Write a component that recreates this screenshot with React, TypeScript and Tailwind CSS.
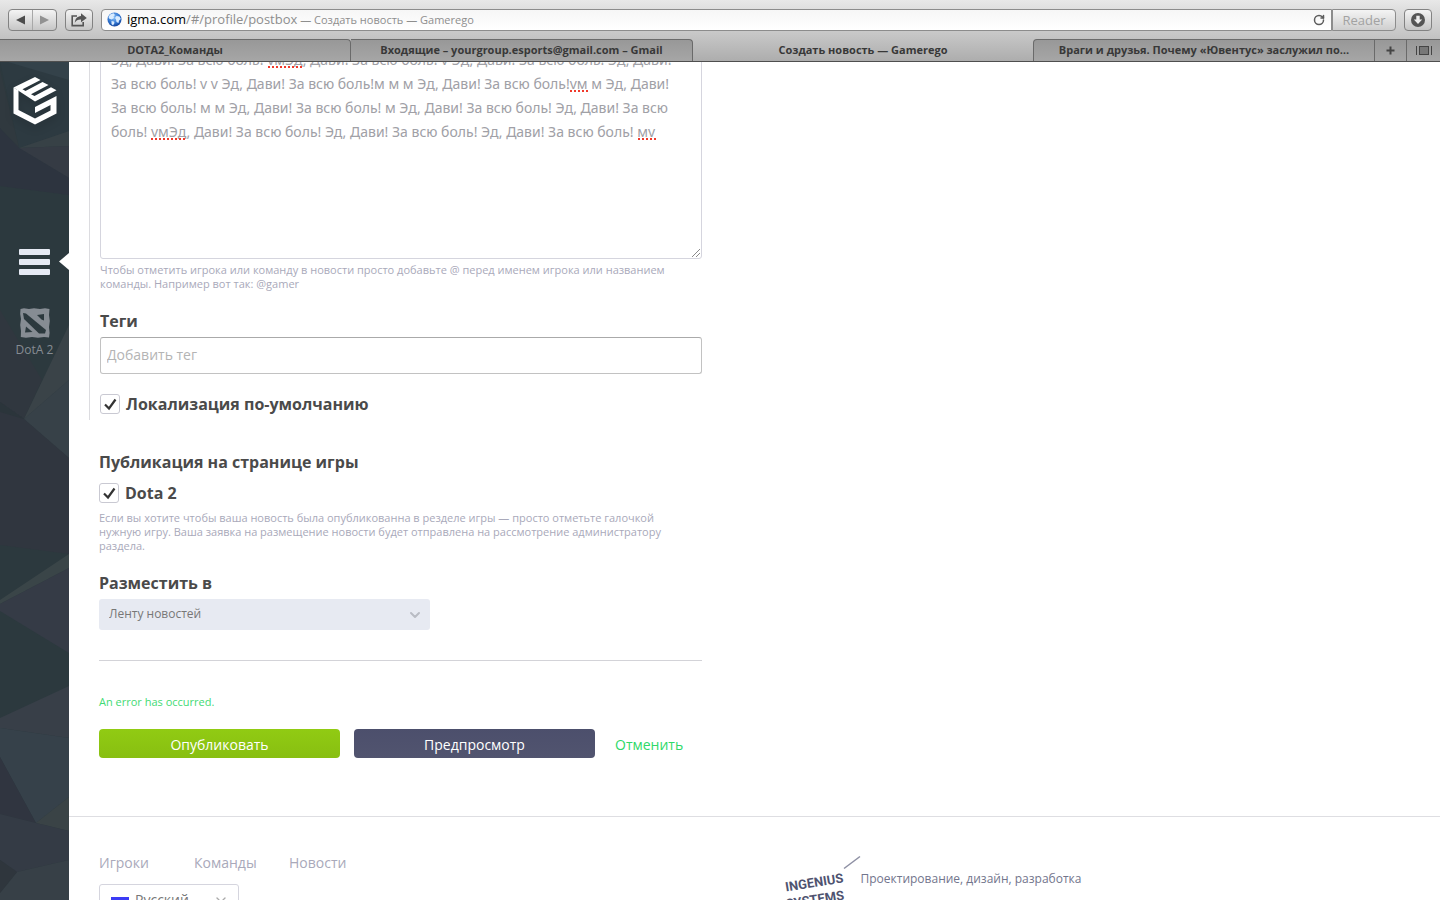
import React, { useState } from "react";
import { ChevronDown, RotateCw } from "lucide-react";

const STORY = [
  "Эд, Дави! За всю боль! vмЭд, Дави! За всю боль! v Эд, Дави! За всю боль! Эд, Дави!",
  "За всю боль! v v Эд, Дави! За всю боль!м м м Эд, Дави! За всю боль!vм м Эд, Дави!",
  "За всю боль! м м Эд, Дави! За всю боль! м Эд, Дави! За всю боль! Эд, Дави! За всю",
  "боль! vмЭд, Дави! За всю боль! Эд, Дави! За всю боль! Эд, Дави! За всю боль! мv",
].join("\n");

// spelling marks drawn over the editor
const MARKS = [
  "left-[168px] top-[26px] w-[34px]",
  "left-[470px] top-[50px] w-[18px]",
  "left-[51px] top-[98px] w-[34px]",
  "left-[538px] top-[98px] w-[18px]",
];

const TOOL_BUTTON =
  "flex h-[22px] items-center justify-center rounded-[4px] border border-[#828282] bg-linear-to-b from-[#f4f4f4] to-[#c6c6c6]";

function Toolbar() {
  return (
    <div className="flex h-[39px] items-center gap-2 px-2">
      <div className={`${TOOL_BUTTON} w-[49px]`}>
        <button aria-label="Назад" className="flex h-full flex-1 items-center justify-center border-r border-[#a8a8a8]">
          <svg width="9" height="10" viewBox="0 0 9 10">
            <path d="M9 0.5v9L0 5z" fill="#4c4c4c" />
          </svg>
        </button>
        <button aria-label="Вперёд" className="flex h-full flex-1 items-center justify-center">
          <svg width="9" height="10" viewBox="0 0 9 10">
            <path d="M0 0.5v9L9 5z" fill="#929292" />
          </svg>
        </button>
      </div>
      <button aria-label="Поделиться" className={`${TOOL_BUTTON} w-7`}>
        <svg width="16" height="14" viewBox="0 0 16 14" fill="none">
          <path d="M6 3H1.2v9.6h11V9" stroke="#555" strokeWidth="1.6" />
          <path d="M10 0.3l5.8 4.6L10 9.2V6.6C7 6.5 5.3 7.3 3.8 9.8 4 5.8 6.2 3.2 10 2.9z" fill="#555" />
        </svg>
      </button>
      <div className="flex h-[22px] flex-1">
        <div className="flex flex-1 items-center rounded-l-[4px] border border-[#8c8c8c] bg-linear-to-b from-[#f6f6f6] to-white pl-[5px] pr-[6px]">
          <svg width="15" height="15" viewBox="0 0 15 15">
            <defs>
              <radialGradient id="globe" cx="45%" cy="35%" r="70%">
                <stop offset="0" stopColor="#8ec4fa" />
                <stop offset="0.6" stopColor="#2f74d0" />
                <stop offset="1" stopColor="#103a8e" />
              </radialGradient>
            </defs>
            <circle cx="7.5" cy="7.5" r="7" fill="url(#globe)" />
            <path d="M3 2.5L6.5 1.2 8 3 6.5 4.5 7 6 4.5 7.5 2 6.5 1.5 5zM9.5 4L12.5 4.5 13.8 7 12 8.5 11.5 11 9.5 10 9 7.5 8 6zM4.5 9L7 9.5 7.5 11 6 13.5 4.5 12z" fill="#d9ecff" />
          </svg>
          <p className="ml-[5px] flex-1 whitespace-nowrap text-[13px] leading-5 text-[#8e8e8e]">
            <span className="text-black">igma.com</span>/#/profile/postbox
            <span className="text-[11px]"> — Создать новость — Gamerego</span>
          </p>
          <button aria-label="Обновить">
            <RotateCw size={12} strokeWidth={3} color="#5c5c5c" />
          </button>
        </div>
        <button className="w-16 rounded-r-[4px] border border-[#8c8c8c] bg-linear-to-b from-[#f4f4f4] to-[#cfcfcf] text-[13px] leading-5 text-[#a2a2a2]">
          Reader
        </button>
      </div>
      <button aria-label="Загрузки" className={`${TOOL_BUTTON} w-7`}>
        <svg width="14" height="14" viewBox="0 0 14 14">
          <circle cx="7" cy="7" r="7" fill="#555" />
          <path d="M5.3 2.8h3.4v3.7h2.5L7 11 2.8 6.5h2.5z" fill="#eee" />
        </svg>
      </button>
    </div>
  );
}

const TAB_OFF = "border-t border-[#6a6a6a] bg-linear-to-b from-[#989898] to-[#a6a6a6]";

function Tabs() {
  return (
    <div className="flex h-[23px] border-b border-[#4f4f4f] text-center text-[11px] font-bold leading-[18px] text-[#383838]">
      <div className="grid min-w-0 flex-1 grid-cols-[351fr_342fr_340fr_342fr]">
        <button className={`${TAB_OFF} truncate rounded-tr-[4px] border-r px-5 pb-0.5`}>DOTA2_Команды</button>
        <button className={`${TAB_OFF} truncate rounded-tr-[4px] border-r px-5 pb-0.5`}>
          Входящие – yourgroup.esports@gmail.com – Gmail
        </button>
        <button className="truncate border-t border-transparent px-5 pb-0.5">Создать новость — Gamerego</button>
        <button className={`${TAB_OFF} truncate rounded-tl-[4px] border-x px-5 pb-0.5`}>
          Враги и друзья. Почему «Ювентус» заслужил по…
        </button>
      </div>
      <button aria-label="Новая вкладка" className={`${TAB_OFF} flex w-8 items-center justify-center border-r`}>
        <svg width="9" height="9" viewBox="0 0 9 9">
          <path d="M4.5 0.5v8M0.5 4.5h8" stroke="#444" strokeWidth="2" />
        </svg>
      </button>
      <button aria-label="Все вкладки" className={`${TAB_OFF} flex w-[33px] items-center justify-center`}>
        <svg width="16" height="9" viewBox="0 0 16 9">
          <path d="M0.5 0v9M15.5 0v9" stroke="#444" />
          <rect x="3.5" y="0.5" width="9" height="8" fill="#777" stroke="#444" />
        </svg>
      </button>
    </div>
  );
}

function Sidebar() {
  return (
    <aside className="relative w-[69px] shrink-0 bg-[#2c393e]">
      <svg className="absolute inset-0 h-full w-full" viewBox="0 62 69 838" preserveAspectRatio="none">
        <path d="M0 62H69V131L19 148z" fill="#2d3a41" />
        <path d="M8 62H69V80z" fill="#34424a" />
        <path d="M0 70L19 148 0 128z" fill="#30393f" />
        <path d="M19 148L69 131V146z" fill="#374146" />
        <path d="M19 148L69 146V178z" fill="#353b44" />
        <path d="M0 128L19 148 69 178V195L0 186z" fill="#2d343f" />
        <path d="M0 310L42 380 24 419 0 402z" fill="#30373f" />
        <path d="M69 325V380L24 419z" fill="#3a4348" />
        <path d="M69 380V458L24 419z" fill="#374148" />
        <path d="M0 402L24 419 69 458V554L0 545z" fill="#30363f" />
        <path d="M0 402L24 419 0 412z" fill="#2b353b" />
        <path d="M0 600L69 554V568L0 604z" fill="#3a4548" />
        <path d="M0 604L69 568V653L0 611z" fill="#353b46" />
        <path d="M0 718L69 686V738L0 728z" fill="#383f48" />
        <path d="M0 728L69 738V797L36 823 0 757z" fill="#36414a" />
        <path d="M0 757L36 823 0 814z" fill="#303540" />
        <path d="M36 823L69 797V831z" fill="#3a4346" />
        <path d="M0 814L36 823 69 831V860L17 872 0 860z" fill="#343b45" />
        <path d="M17 872L69 860V900H0V893z" fill="#374047" />
        <path d="M0 860L17 872 0 893z" fill="#2f363d" />
      </svg>
      <div className="relative flex flex-col items-center pt-[15px]">
        <a href="#home" aria-label="Gamerego" className="drop-shadow-lg">
          <svg width="44" height="48" viewBox="0 0 44 48" fill="#fff">
            <path d="M0.5 10.5L22 0 27.5 3 9.5 12.3 12.5 14 29.5 5 35.5 8 18 17.2 21.5 19 38 10.3 43.5 13.2 22 24.5z" />
            <path d="M0.5 10.5V36.5L22 47.5 43.5 36.5V19L22 30V36L37.5 28V33.5L22 41.5 5.5 33V13.5z" />
          </svg>
        </a>
        <button aria-label="Меню" className="mt-[124px] flex flex-col gap-1">
          <span className="h-1.5 w-[31px] rounded-[1px] bg-[#e6eaf4]" />
          <span className="h-1.5 w-[31px] rounded-[1px] bg-[#e6eaf4]" />
          <span className="h-1.5 w-[31px] rounded-[1px] bg-[#e6eaf4]" />
        </button>
        <a href="#dota2" className="mt-[33px] flex flex-col items-center text-xs leading-4 text-[#868c93]">
          <svg width="30" height="30" viewBox="0 0 30 30">
            <path
              d="M0.5 1L4 0.3 9 1 14 0.2 20 1 25 0.2 29.5 1 29 7 29.8 13 29 19 29.6 25 29 29.5 24 29 18 29.8 12 29 6 29.7 0.8 29 1 23 0.2 17 1 11 0.2 6z"
              fill="#868c93"
            />
            <path d="M3 5L6 5.5 26 22 25 25.5 19 25.5 4 11z" fill="#2c393e" />
            <path d="M17 7L24 6V12.5L21.5 11.5z" fill="#2c393e" />
            <path d="M6 18.5L12.5 24 5 24.5z" fill="#2c393e" />
          </svg>
          <span className="mt-1">DotA 2</span>
        </a>
      </div>
      <svg className="absolute right-0 top-[191px]" width="10" height="17" viewBox="0 0 10 17">
        <path d="M10 0v17L0 8.5z" fill="#fff" />
      </svg>
    </aside>
  );
}

function Check({ label }: { label: string }) {
  const [on, setOn] = useState(true);
  return (
    <label className="flex h-5 items-center gap-1.5 text-base font-bold text-[#4a4a4a]">
      <span className="relative h-5 w-5">
        <input
          type="checkbox"
          checked={on}
          onChange={() => setOn(!on)}
          className="block h-5 w-5 appearance-none rounded-[3px] border border-[#c9c9d2] bg-white"
        />
        {on && (
          <svg className="pointer-events-none absolute inset-0" width="20" height="20" viewBox="0 0 20 20" fill="none">
            <path d="M5 10.5L9 14.5 15.5 5.5" stroke="#333" strokeWidth="2.2" />
          </svg>
        )}
      </span>
      {label}
    </label>
  );
}

const HEADING = "text-base font-bold leading-6 text-[#4a4a4a]";
const HINT = "max-w-[590px] text-[11px] leading-[14px] text-[#a9a9ba]";

function PostForm() {
  return (
    <form className="w-[613px]" onSubmit={(e) => e.preventDefault()}>
      {/* localized part of the post */}
      <div className="-mt-[22px] border-l border-[#dcdce0] pb-1.5 pl-2.5">
        <div className="relative">
          <textarea
            aria-label="Текст новости"
            defaultValue={STORY}
            spellCheck={false}
            className="block h-[219px] w-full resize-none overflow-hidden rounded-[3px] border border-[#d5d5de] px-2.5 py-[7px] font-['Noto_Sans',sans-serif] text-sm leading-6 text-[#a0a0a6]"
          />
          {MARKS.map((mark) => (
            <span key={mark} className={`absolute border-b-2 border-dotted border-[#f0392b] ${mark}`} />
          ))}
          <svg className="absolute bottom-[2px] right-[2px]" width="8" height="8" viewBox="0 0 8 8">
            <path d="M0 8L8 0M4 8L8 4" stroke="#8a8a8a" />
          </svg>
        </div>
        <p className={`mt-1 ${HINT}`}>
          Чтобы отметить игрока или команду в новости просто добавьте @ перед именем игрока или названием команды.
          Например вот так: @gamer
        </p>
        <label htmlFor="tags" className={`mt-[18px] block ${HEADING}`}>
          Теги
        </label>
        <input
          id="tags"
          placeholder="Добавить тег"
          className="mt-1 mb-5 block h-[37px] w-full rounded-[3px] border border-[#c2c2c2] border-t-[#aaa] px-1.5 pb-0.5 text-sm placeholder:text-[#b4b4b4]"
        />
        <Check label="Локализация по-умолчанию" />
      </div>

      <div className="ml-2.5">
        <h2 className={`mt-[30px] mb-[9px] ${HEADING}`}>Публикация на странице игры</h2>
        <Check label="Dota 2" />
        <p className={`mt-2 ${HINT}`}>
          Если вы хотите чтобы ваша новость была опубликованна в резделе игры — просто отметьте галочкой нужную игру.
          Ваша заявка на размещение новости будет отправлена на рассмотрение администратору раздела.
        </p>
        <label htmlFor="place" className={`mt-[18px] block ${HEADING}`}>
          Разместить в
        </label>
        <div className="relative mt-1 w-[331px]">
          <select
            id="place"
            className="block h-[31px] w-full appearance-none rounded-[3px] bg-[#e7eaf2] px-2.5 pb-0.5 text-xs text-[#777]"
          >
            <option>Ленту новостей</option>
          </select>
          <ChevronDown className="pointer-events-none absolute right-[7px] top-2" size={16} strokeWidth={3} color="#b9bcc4" />
        </div>
        <hr className="mt-[30px] border-[#d3d3d8]" />
        <p className="mt-[34px] text-[11px] leading-[14px] text-[#3fda74]">An error has occurred.</p>
        <div className="mt-5 flex items-center gap-3.5 text-sm">
          <button className="h-[29px] w-[241px] rounded-[4px] bg-linear-to-b from-[#91cb13] to-[#88bf11] pt-0.5 text-white">
            Опубликовать
          </button>
          <button className="h-[29px] w-[241px] rounded-[4px] bg-linear-to-b from-[#4c4f6c] to-[#51546f] pt-0.5 text-white">
            Предпросмотр
          </button>
          <a href="#cancel" className="ml-1.5 pt-0.5 text-[#2fd968]">
            Отменить
          </a>
        </div>
      </div>
    </form>
  );
}

function Footer() {
  return (
    <footer className="mt-[58px] grid grid-cols-2 border-t border-[#dedee2] pt-9 pl-[30px]">
      <div>
        <nav className="grid grid-cols-[95px_95px_95px] text-sm leading-5 text-[#a9a9ba]">
          <a href="#players">Игроки</a>
          <a href="#teams">Команды</a>
          <a href="#news">Новости</a>
        </nav>
        <div className="relative mt-[11px] w-[140px]">
          <select
            aria-label="Язык"
            className="block h-[31px] w-full appearance-none rounded-[3px] border border-[#d5d5de] bg-white pl-[35px] text-sm text-[#777]"
          >
            <option>Русский</option>
          </select>
          <svg className="pointer-events-none absolute left-3 top-[9px]" width="18" height="12" viewBox="0 0 18 12">
            <path d="M0 0h18v4H0z" fill="#fff" />
            <path d="M0 4h18v4H0z" fill="#3c3cf5" />
            <path d="M0 8h18v4H0z" fill="#e33" />
          </svg>
          <ChevronDown className="pointer-events-none absolute right-2.5 top-2" size={16} strokeWidth={2} color="#aaa" />
        </div>
      </div>
      <div className="flex items-start pl-4 text-[#72758c]">
        <svg className="overflow-visible" width="75" height="60" viewBox="0 0 75 60">
          <path d="M58 15.5L74 3.5" stroke="#8d8fa3" strokeWidth="1.5" />
          <g transform="rotate(-9)" fill="#4f5370" fontFamily="Roboto, sans-serif" fontSize="13" fontWeight="700">
            <text x="-6" y="38">INGENIUS</text>
            <text x="-8" y="55">SYSTEMS</text>
          </g>
        </svg>
        <a href="#ingenius" className="pt-4 text-xs leading-5">
          Проектирование, дизайн, разработка
        </a>
      </div>
    </footer>
  );
}

export default function App() {
  return (
    <div className="flex h-screen flex-col overflow-hidden bg-white font-['Open_Sans','Noto_Sans',sans-serif]">
      <header className="shrink-0 bg-linear-to-b from-[#e8e8e8] to-[#acacac]">
        <Toolbar />
        <Tabs />
      </header>
      <div className="flex min-h-0 flex-1">
        <Sidebar />
        <main className="min-w-0 flex-1 overflow-hidden">
          <div className="pl-5">
            <PostForm />
          </div>
          <Footer />
        </main>
      </div>
    </div>
  );
}
